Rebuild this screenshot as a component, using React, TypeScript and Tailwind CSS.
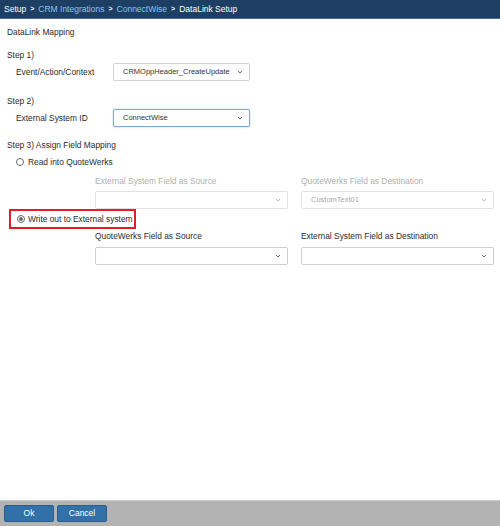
import React from "react";

const Chevron = ({ light }: { light?: boolean }) => (
  <svg width="6" height="4" viewBox="0 0 6 4" className="shrink-0">
    <path d="M1 1 L3 3 L5 1" fill="none" stroke={light ? "#b0b0b0" : "#555"} strokeWidth="0.9" />
  </svg>
);

const Select = ({
  value,
  width,
  disabled,
  focus,
}: {
  value?: string;
  width: string;
  disabled?: boolean;
  focus?: boolean;
}) => (
  <div
    className={`${width} h-[18px] flex items-center justify-between pl-[9px] pr-[6px] rounded-[2px] border bg-white ${
      focus
        ? "border-[#80a8d8] shadow-[0_0_2px_#a9c8ec]"
        : disabled
        ? "border-[#e2e2e2]"
        : "border-[#cfcfcf]"
    }`}
  >
    <span className={`text-[7.5px] whitespace-nowrap ${disabled ? "text-[#a8a8a8]" : "text-[#333]"}`}>{value ?? ""}</span>
    <Chevron light={disabled} />
  </div>
);

const Radio = ({ checked }: { checked?: boolean }) => (
  <span className="w-[8px] h-[8px] rounded-full border border-[#6b6b6b] bg-white flex items-center justify-center shrink-0">
    {checked && <span className="w-[4px] h-[4px] rounded-full bg-[#6b6b6b]" />}
  </span>
);

export default function App() {
  return (
    <div
      className="w-[500px] h-[526px] flex flex-col bg-white text-[8.4px] text-[#2b2b2b]"
      style={{ fontFamily: '"Liberation Sans", Arial, sans-serif' }}
    >
      <div className="h-[19px] bg-[#1c3f63] border-b border-[#4b6c8d] flex items-center pl-[4px] text-[8.5px] text-white shrink-0 whitespace-nowrap">
        <span>Setup</span>
        <span className="mx-[4px] font-bold text-[7px]">&gt;</span>
        <span className="text-[#8fc3ef]">CRM Integrations</span>
        <span className="mx-[4px] font-bold text-[7px]">&gt;</span>
        <span className="text-[#8fc3ef]">ConnectWise</span>
        <span className="mx-[4px] font-bold text-[7px]">&gt;</span>
        <span>DataLink Setup</span>
      </div>

      <div className="flex-1 flex flex-col whitespace-nowrap">
        <div className="pl-[7px] pt-[7px] leading-[12px]">DataLink Mapping</div>
        <div className="pl-[7px] mt-[11px] leading-[12px]">Step 1)</div>
        <div className="mt-[2px] flex items-center">
          <span className="pl-[16px] w-[113px] leading-[12px]">Event/Action/Context</span>
          <Select value="CRMOppHeader_CreateUpdate" width="w-[137px]" />
        </div>
        <div className="pl-[7px] mt-[14px] leading-[12px]">Step 2)</div>
        <div className="mt-[2px] flex items-center">
          <span className="pl-[16px] w-[113px] leading-[12px]">External System ID</span>
          <Select value="ConnectWise" width="w-[137px]" focus />
        </div>
        <div className="pl-[7px] mt-[12px] leading-[12px]">Step 3) Assign Field Mapping</div>
        <div className="mt-[5px] pl-[16px] flex items-center gap-[4px] leading-[12px]">
          <Radio />
          <span>Read into QuoteWerks</span>
        </div>
        <div className="mt-[7px] pl-[95px] flex gap-[13px] leading-[12px] text-[#b0b0b0]">
          <span className="w-[193px]">External System Field as Source</span>
          <span className="w-[193px]">QuoteWerks Field as Destination</span>
        </div>
        <div className="mt-[4px] pl-[95px] flex gap-[13px]">
          <Select width="w-[193px]" disabled />
          <Select value="CustomText01" width="w-[193px]" disabled />
        </div>
        <div className="ml-[9px] w-[127px] h-[20px] border-2 border-[#e31e24] flex items-center pl-[6px] gap-[3px]">
          <Radio checked />
          <span className="leading-[12px]">Write out to External system</span>
        </div>
        <div className="mt-[1px] pl-[95px] flex gap-[13px] leading-[12px]">
          <span className="w-[193px]">QuoteWerks Field as Source</span>
          <span className="w-[193px]">External System Field as Destination</span>
        </div>
        <div className="mt-[5px] pl-[95px] flex gap-[13px]">
          <Select width="w-[193px]" />
          <Select width="w-[193px]" />
        </div>
      </div>

      <div className="h-[26px] bg-[#b3b3b3] border-t border-[#cacaca] flex items-center pl-[4px] gap-[3px] shrink-0">
        <button className="w-[50px] h-[17px] rounded-[2px] bg-[#3270a8] border border-[#285d8e] text-white text-[8.5px] leading-none">
          Ok
        </button>
        <button className="w-[50px] h-[17px] rounded-[2px] bg-[#3270a8] border border-[#285d8e] text-white text-[8.5px] leading-none">
          Cancel
        </button>
      </div>
    </div>
  );
}
